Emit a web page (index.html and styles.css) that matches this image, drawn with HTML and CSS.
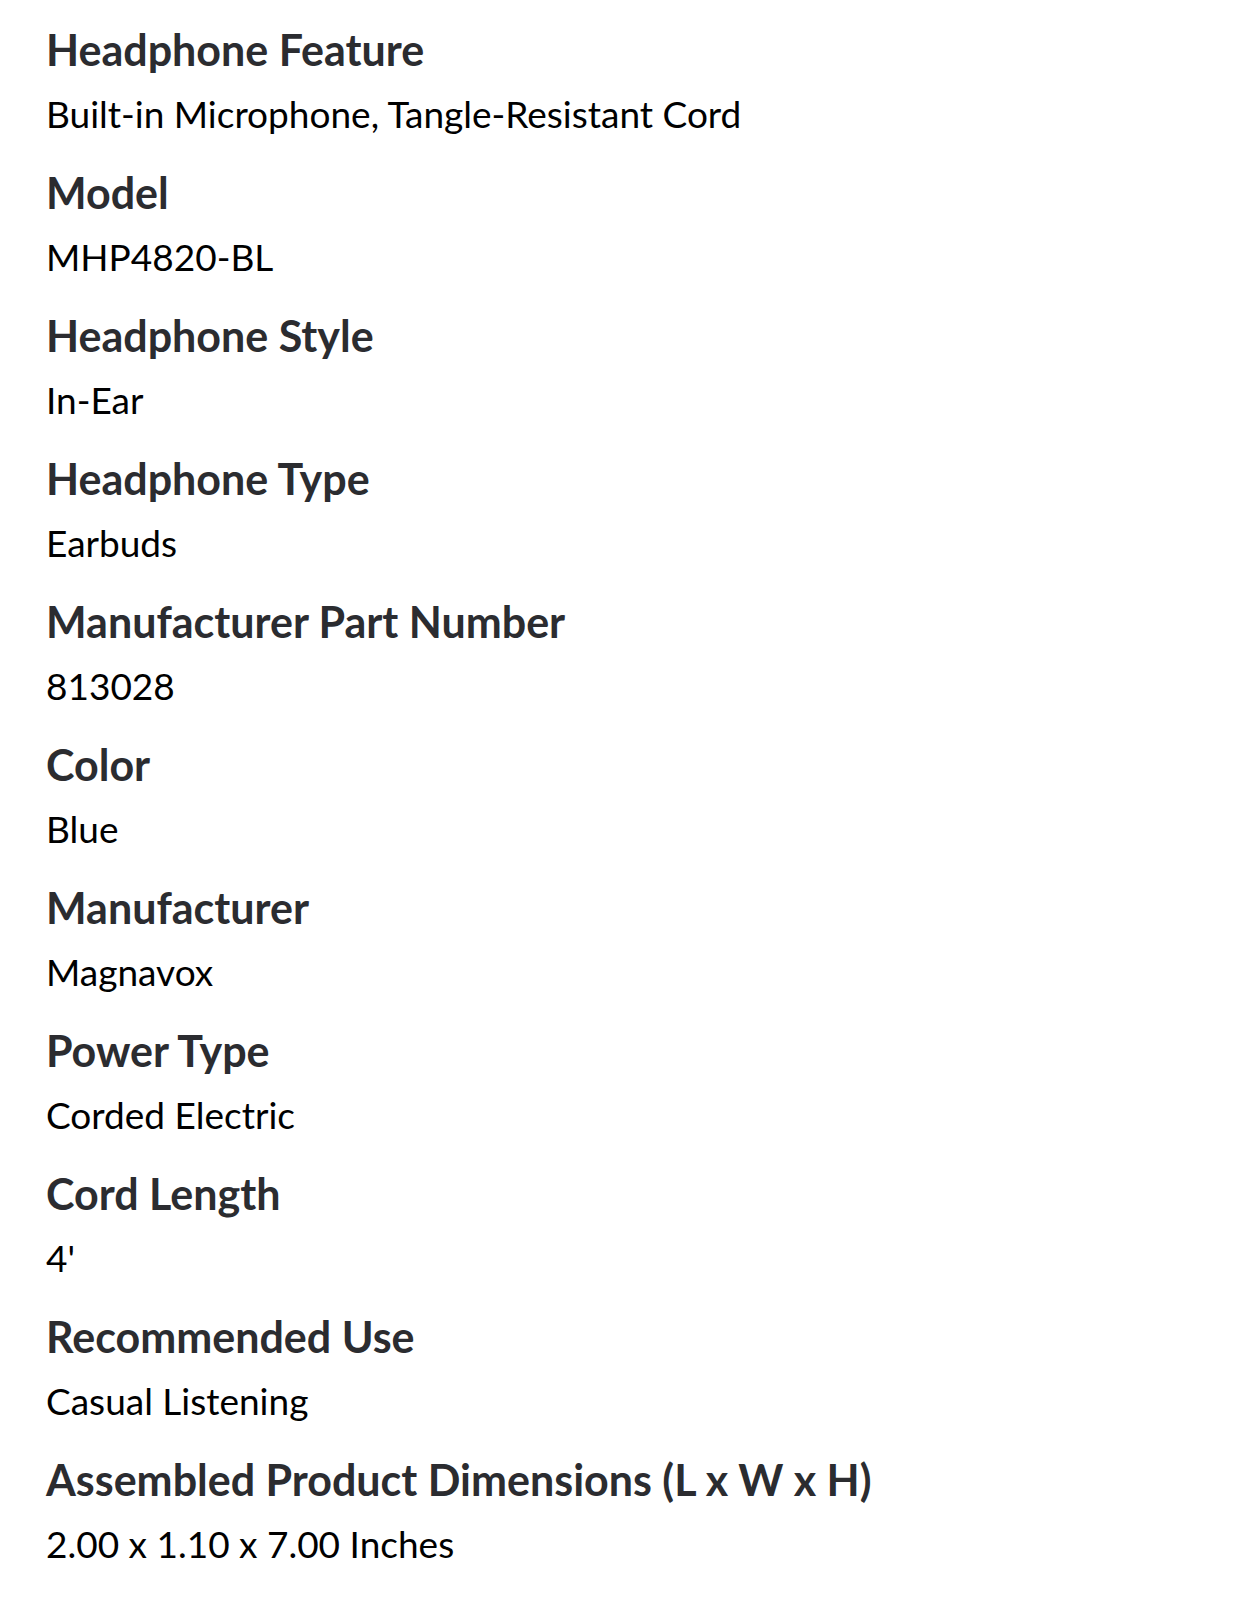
FILE: index.html
```html
<!DOCTYPE html>
<html lang="en">
<head>
<meta charset="utf-8">
<title>Specifications</title>
<link rel="stylesheet" href="styles.css">
</head>
<body>
<dl class="specs">
  <div class="spec"><dt class="spec-name">Headphone Feature</dt><dd class="spec-value">Built-in Microphone, Tangle-Resistant Cord</dd></div>
  <div class="spec"><dt class="spec-name">Model</dt><dd class="spec-value">MHP4820-BL</dd></div>
  <div class="spec"><dt class="spec-name">Headphone Style</dt><dd class="spec-value">In-Ear</dd></div>
  <div class="spec"><dt class="spec-name">Headphone Type</dt><dd class="spec-value">Earbuds</dd></div>
  <div class="spec"><dt class="spec-name">Manufacturer Part Number</dt><dd class="spec-value">813028</dd></div>
  <div class="spec"><dt class="spec-name">Color</dt><dd class="spec-value">Blue</dd></div>
  <div class="spec"><dt class="spec-name">Manufacturer</dt><dd class="spec-value">Magnavox</dd></div>
  <div class="spec"><dt class="spec-name">Power Type</dt><dd class="spec-value">Corded Electric</dd></div>
  <div class="spec"><dt class="spec-name">Cord Length</dt><dd class="spec-value">4'</dd></div>
  <div class="spec"><dt class="spec-name">Recommended Use</dt><dd class="spec-value">Casual Listening</dd></div>
  <div class="spec"><dt class="spec-name">Assembled Product Dimensions (L x W x H)</dt><dd class="spec-value">2.00 x 1.10 x 7.00 Inches</dd></div>
</dl>
</body>
</html>
```
FILE: styles.css
```css
html, body {
  margin: 0;
  padding: 0;
  background: #ffffff;
}
body {
  font-family: Lato, "Open Sans", "Liberation Sans", sans-serif;
}
.specs {
  margin: 0;
  padding: 22px 0 0 46px;
  display: flex;
  flex-direction: column;
}
.spec {
  height: 143px;
  display: flex;
  flex-direction: column;
}
.spec-name {
  margin: 0;
  font-size: 43px;
  line-height: 56px;
  font-weight: 700;
  color: #2b2c30;
  letter-spacing: 0;
}
.spec-value {
  margin: 8px 0 0 0;
  font-size: 37px;
  line-height: 56px;
  font-weight: 400;
  color: #000000;
}
```
